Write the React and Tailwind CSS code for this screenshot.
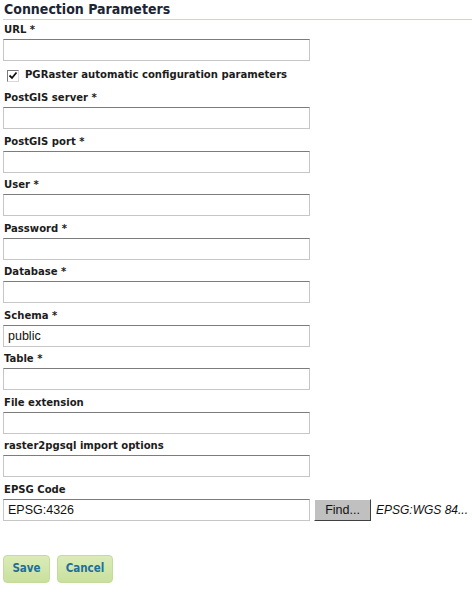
import React from 'react';

const labelFont = { fontFamily: '"DejaVu Sans Condensed", "DejaVu Sans", sans-serif' };

const fields = [
  { label: 'PostGIS server *', value: '' },
  { label: 'PostGIS port *', value: '' },
  { label: 'User *', value: '' },
  { label: 'Password *', value: '' },
  { label: 'Database *', value: '' },
  { label: 'Schema *', value: 'public' },
  { label: 'Table *', value: '' },
  { label: 'File extension', value: '' },
  { label: 'raster2pgsql import options', value: '' },
];

function TextBox({ value }) {
  return (
    <div className="h-[22px] w-[307px] border border-[#c6c6c6] border-t-[#7c7c7c] bg-white px-[4px] text-[12.5px] leading-[20px] text-[#111] font-['Liberation_Sans',sans-serif]">
      {value}
    </div>
  );
}

function Field({ label, value }) {
  return (
    <div className="mb-[3.5px]">
      <div className="h-[18px] pl-[1px] text-[11.2px] font-bold leading-[18px] text-[#1c1c1c]" style={labelFont}>
        {label}
      </div>
      <TextBox value={value} />
    </div>
  );
}

export default function App() {
  return (
    <div className="w-[472px] h-[596px] bg-white pl-[3px]">
      <div
        className="h-[20px] border-b border-[#c9dfa0] pl-[1px] text-[14px] font-bold leading-[19px] text-[#1b2534]"
        style={labelFont}
      >
        Connection Parameters
      </div>

      <div className="mt-[1px]">
        <div className="h-[18px] pl-[1px] text-[11.2px] font-bold leading-[18px] text-[#1c1c1c]" style={labelFont}>
          URL *
        </div>
        <TextBox value="" />
      </div>

      {/* checkbox row */}
      <div className="flex h-[28px] items-center pl-[4px] pt-[1px]">
        <div className="flex h-[12px] w-[12px] items-center justify-center border border-[#7a7a7a] border-b-[#d8d8d8] border-r-[#d8d8d8] bg-white">
          <svg width="10" height="10" viewBox="0 0 10 10">
            <path d="M1.5 4.5 L4 7 L8.5 1.5" fill="none" stroke="#111" strokeWidth="1.8" />
          </svg>
        </div>
        <span className="ml-[6px] text-[11.2px] font-bold text-[#1c1c1c]" style={labelFont}>
          PGRaster automatic configuration parameters
        </span>
      </div>

      {fields.map((f) => (
        <Field key={f.label} label={f.label} value={f.value} />
      ))}

      <div>
        <div className="h-[18px] pl-[1px] text-[11.2px] font-bold leading-[18px] text-[#1c1c1c]" style={labelFont}>
          EPSG Code
        </div>
        <div className="flex items-center">
          <TextBox value="EPSG:4326" />
          <div className="ml-[4px] h-[22px] w-[57px] border border-white border-b-[#404040] border-r-[#404040] bg-[#c0c0c0] text-center text-[12.5px] leading-[20px] text-[#111] font-['Liberation_Sans',sans-serif]">
            Find...
          </div>
          <span className="ml-[5px] text-[12px] italic text-[#111] font-['Liberation_Sans',sans-serif]">
            EPSG:WGS 84...
          </span>
        </div>
      </div>

      <div className="mt-[34px] flex gap-[7px]">
        <div
          className="flex h-[28px] w-[47px] items-center justify-center rounded-[4px] border border-[#c3dc9b] bg-gradient-to-b from-[#dbecb8] to-[#c8e09e] text-[11.5px] font-bold text-[#1f6f98]"
          style={labelFont}
        >
          Save
        </div>
        <div
          className="flex h-[28px] w-[56px] items-center justify-center rounded-[4px] border border-[#c3dc9b] bg-gradient-to-b from-[#dbecb8] to-[#c8e09e] text-[11.5px] font-bold text-[#1f6f98]"
          style={labelFont}
        >
          Cancel
        </div>
      </div>
    </div>
  );
}
